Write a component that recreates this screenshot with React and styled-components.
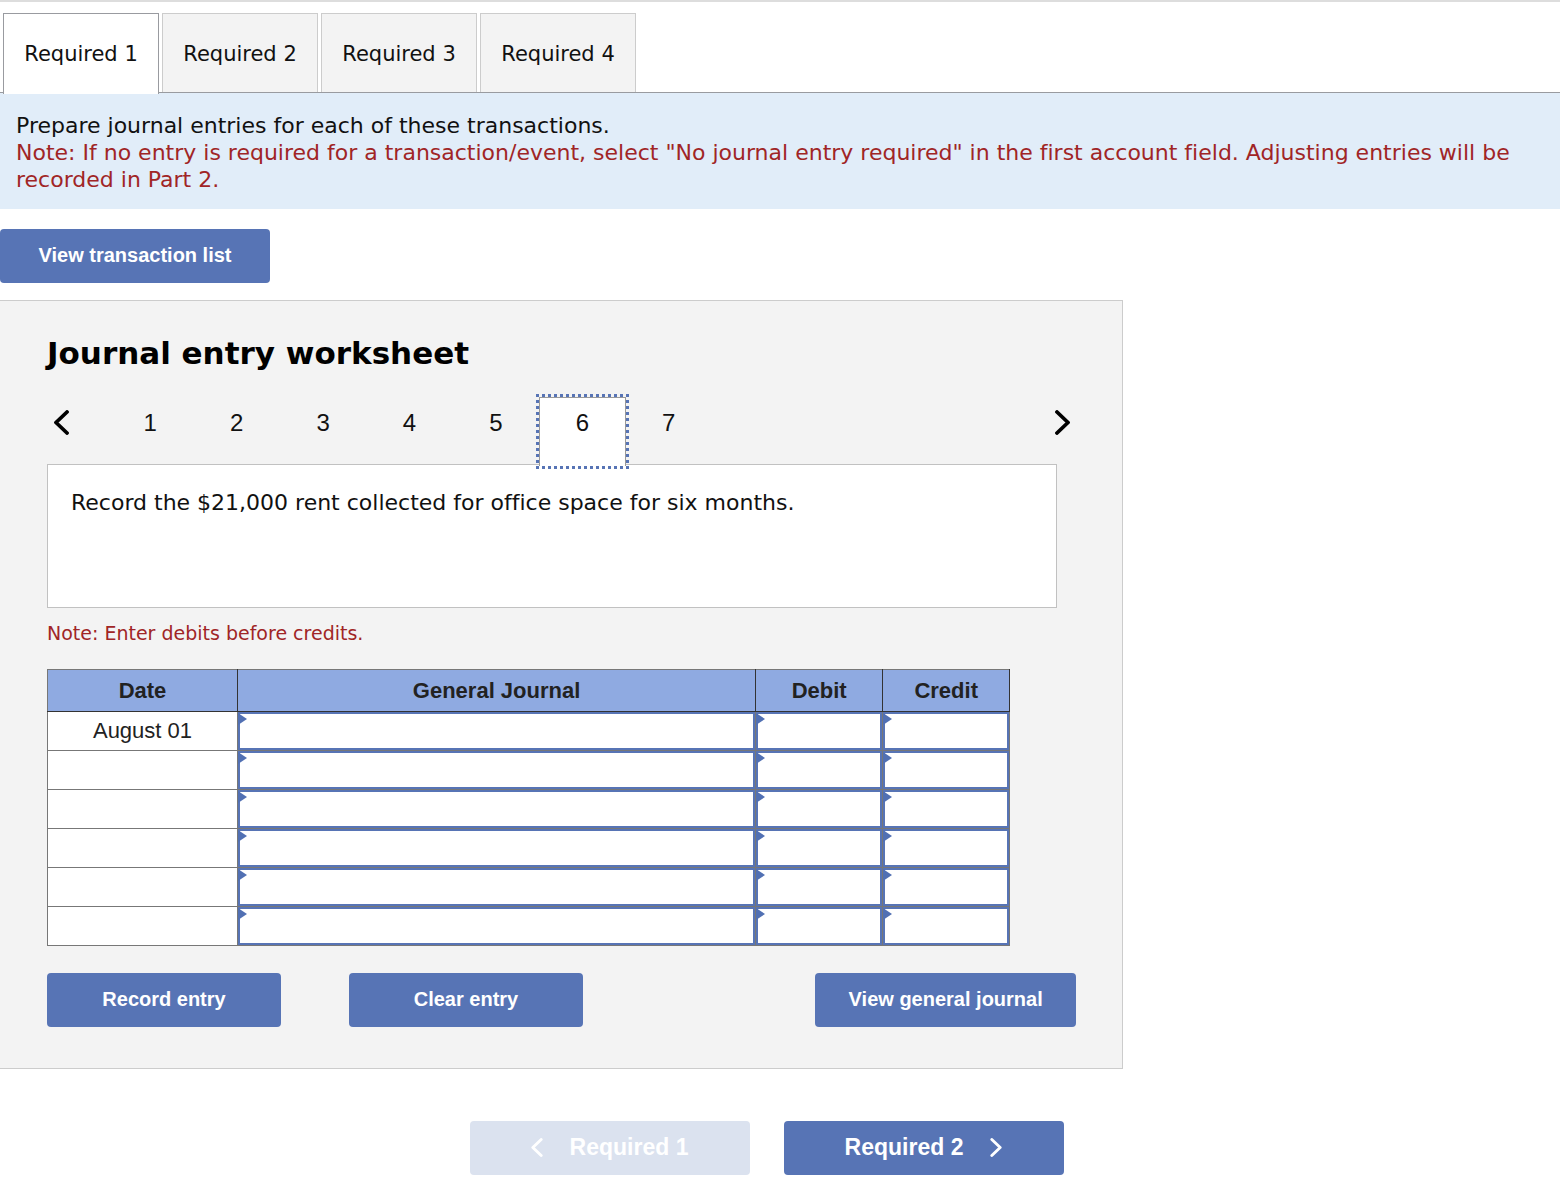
import React, { useState } from "react";
import styled, { createGlobalStyle } from "styled-components";

const GlobalStyle = createGlobalStyle`
  * {
    box-sizing: border-box;
  }
  body {
    margin: 0;
    background: #fff;
    color: #111;
    font-family: Verdana, "DejaVu Sans", sans-serif;
    font-variant-ligatures: none;
  }
  button,
  input {
    font-family: inherit;
    color: inherit;
  }
`;

const Page = styled.div`
  border-top: 2px solid #ddd;
`;

const Tabs = styled.div`
  display: flex;
  gap: 3px;
  padding: 11px 3px 0;
  border-bottom: 1px solid #999ba0;
`;

const Tab = styled.button`
  width: 156px;
  height: ${(props) => (props.$active ? "81px" : "79px")};
  margin-bottom: ${(props) => (props.$active ? "-2px" : "0")};
  padding: ${(props) => (props.$active ? "0" : "2px 0 0")};
  border: 1px solid ${(props) => (props.$active ? "#999ba0" : "#ccc")};
  border-bottom: none;
  background: ${(props) => (props.$active ? "#fff" : "#f3f3f3")};
  font-size: 21px;
  cursor: pointer;
`;

const Instructions = styled.div`
  padding: 19px 16px 16px;
  background: #e1edf9;
  font-size: 22px;
  line-height: 27px;

  p {
    margin: 0;
  }
`;

const RedText = styled.p`
  color: #a02526;
`;

const Button = styled.button`
  display: flex;
  align-items: center;
  justify-content: center;
  gap: 27px;
  width: ${(props) => props.$width};
  height: 54px;
  padding: 0 0 2px;
  border: none;
  border-radius: 4px;
  background: #5774b5;
  color: #fff;
  font-family: Arial, "Liberation Sans", sans-serif;
  font-size: ${(props) => (props.$large ? "23px" : "20px")};
  font-weight: bold;
  cursor: pointer;

  &:disabled {
    background: #dbe2ef;
    cursor: default;
  }
`;

const ListBar = styled.div`
  padding: 20px 0 17px;
`;

const Worksheet = styled.section`
  width: 72%;
  padding: 30px 46px 41px 47px;
  border: 1px solid #ccc;
  border-left: none;
  background: #f3f3f3;
`;

const Title = styled.h1`
  margin: 0 0 22px;
  color: #000;
  font-size: 31px;
  line-height: 44px;
`;

const Pager = styled.nav`
  display: flex;
  align-items: flex-start;
`;

const ArrowButton = styled.button`
  display: flex;
  align-items: center;
  justify-content: center;
  width: 28px;
  height: 50px;
  padding: 0;
  border: none;
  background: none;
  color: #000;
  cursor: pointer;
`;

const Steps = styled.div`
  display: grid;
  grid-template-columns: repeat(7, 1fr);
  width: 605px;
  margin: 0 auto 0 32px;
`;

const Step = styled.button`
  height: 69px;
  margin-bottom: -2px;
  padding: 0 0 19px;
  border: 1px solid ${(props) => (props.$active ? "#999" : "transparent")};
  border-bottom: none;
  outline: ${(props) => (props.$active ? "3px dotted #5774b5" : "none")};
  background: ${(props) => (props.$active ? "#fff" : "none")};
  font-family: Arial, "Liberation Sans", sans-serif;
  font-size: 24px;
  cursor: pointer;
  z-index: 1;
`;

const Description = styled.div`
  min-height: 144px;
  margin-right: 19px;
  padding: 24px 23px;
  border: 1px solid #c1c1c1;
  background: #fff;
  font-size: 22px;
  line-height: 27px;
`;

const EntryNote = styled(RedText)`
  margin: 12px 0 23px;
  font-size: 19px;
  line-height: 26px;
`;

const TableHolder = styled.div`
  margin-right: 66px;
`;

const Table = styled.table`
  width: 100%;
  table-layout: fixed;
  border-collapse: collapse;
  background: #fff;
  color: #222;
  font-family: Arial, "Liberation Sans", sans-serif;
  font-size: 22px;

  th,
  td {
    padding: 0;
    border: 1px solid #777;
    text-align: center;
  }
  th {
    height: 42px;
    border-color: #777 #333 #333;
    background: #8faae1;
  }
  th:first-child {
    width: 190px;
    border-left-color: #777;
  }
  th:nth-child(n + 3) {
    width: 127px;
  }
  td {
    height: 39px;
  }
`;

const EntryCell = styled.td`
  position: relative;

  &::before {
    content: "";
    position: absolute;
    top: 1px;
    left: 0;
    border: 6px solid transparent;
    border-left: 9px solid #5170b3;
    border-right: none;
  }
`;

const EntryInput = styled.input`
  display: block;
  width: 100%;
  height: 38px;
  padding: 0 12px;
  border: 2px solid #5774b5;
  border-radius: 0;
  background: #fff;
  font-size: 22px;
`;

const Actions = styled.div`
  display: flex;
  gap: 68px;
  margin-top: 27px;

  button:last-child {
    margin-left: auto;
  }
`;

const Footer = styled.footer`
  display: flex;
  justify-content: center;
  gap: 34px;
  padding: 52px 27px 16px 0;
`;

const Chevron = ({ width, height, right }) => (
  <svg width={width} height={height} viewBox="0 0 15 25" fill="none" aria-hidden="true">
    <path
      d={right ? "M2 2L13 12.5L2 23" : "M13 2L2 12.5L13 23"}
      stroke="currentColor"
      strokeWidth="3.8"
      strokeLinecap="round"
      strokeLinejoin="round"
    />
  </svg>
);

const requirements = [1, 2, 3, 4];
const steps = [1, 2, 3, 4, 5, 6, 7];
const dates = ["August 01", "", "", "", "", ""];
const fields = ["General Journal", "Debit", "Credit"];

const App = () => {
  const [tab, setTab] = useState(1);
  const [step, setStep] = useState(6);

  return (
    <>
      <GlobalStyle />
      <Page>
        <Tabs role="tablist">
          {requirements.map((n) => (
            <Tab
              key={n}
              role="tab"
              aria-selected={tab === n}
              $active={tab === n}
              onClick={() => setTab(n)}
            >
              Required {n}
            </Tab>
          ))}
        </Tabs>
        <Instructions>
          <p>Prepare journal entries for each of these transactions.</p>
          <RedText>
            Note: If no entry is required for a transaction/event, select "No
            journal entry required" in the first account field. Adjusting
            entries will be recorded in Part 2.
          </RedText>
        </Instructions>
        <ListBar>
          <Button $width="270px">View transaction list</Button>
        </ListBar>
        <Worksheet>
          <Title>Journal entry worksheet</Title>
          <Pager>
            <ArrowButton
              aria-label="Previous transaction"
              onClick={() => setStep((prev) => Math.max(1, prev - 1))}
            >
              <Chevron width={15} height={25} />
            </ArrowButton>
            <Steps>
              {steps.map((n) => (
                <Step key={n} $active={step === n} onClick={() => setStep(n)}>
                  {n}
                </Step>
              ))}
            </Steps>
            <ArrowButton
              aria-label="Next transaction"
              onClick={() => setStep((prev) => Math.min(7, prev + 1))}
            >
              <Chevron width={15} height={25} right />
            </ArrowButton>
          </Pager>
          <Description>
            Record the $21,000 rent collected for office space for six months.
          </Description>
          <EntryNote>Note: Enter debits before credits.</EntryNote>
          <TableHolder>
            <Table>
              <thead>
                <tr>
                  <th>Date</th>
                  {fields.map((field) => (
                    <th key={field}>{field}</th>
                  ))}
                </tr>
              </thead>
              <tbody>
                {dates.map((date, row) => (
                  <tr key={row}>
                    <td>{date}</td>
                    {fields.map((field) => (
                      <EntryCell key={field}>
                        <EntryInput aria-label={`${field}, row ${row + 1}`} />
                      </EntryCell>
                    ))}
                  </tr>
                ))}
              </tbody>
            </Table>
          </TableHolder>
          <Actions>
            <Button $width="234px">Record entry</Button>
            <Button $width="234px">Clear entry</Button>
            <Button $width="261px">View general journal</Button>
          </Actions>
        </Worksheet>
        <Footer>
          <Button $width="280px" $large disabled>
            <Chevron width={12} height={19} />
            Required 1
          </Button>
          <Button $width="280px" $large>
            Required 2
            <Chevron width={12} height={19} right />
          </Button>
        </Footer>
      </Page>
    </>
  );
};

export default App;
